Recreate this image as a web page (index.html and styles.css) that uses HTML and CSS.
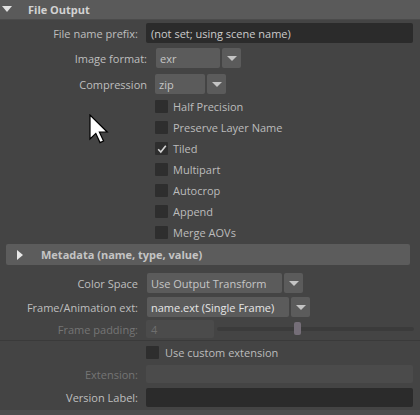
FILE: index.html
```html
<!DOCTYPE html>
<html>
<head>
<meta charset="utf-8">
<link rel="stylesheet" href="styles.css">
</head>
<body>
<div class="panel">
  <div class="header">
    <span class="tri-down"></span>
    <span class="header-title">File Output</span>
  </div>

  <div class="row r1">
    <label class="lbl w138">File name prefix:</label>
    <div class="field dark wide">(not set; using scene name)</div>
  </div>

  <div class="row r2">
    <label class="lbl w147">Image format:</label>
    <div class="dd">
      <div class="dd-val w-exr">exr</div>
      <div class="dd-btn"><span class="arrow"></span></div>
    </div>
  </div>

  <div class="row r3">
    <label class="lbl w147">Compression</label>
    <div class="dd">
      <div class="dd-val w-zip">zip</div>
      <div class="dd-btn"><span class="arrow"></span></div>
    </div>
  </div>

  <div class="checks">
    <div class="check"><span class="box"></span><span class="clabel">Half Precision</span></div>
    <div class="check"><span class="box"></span><span class="clabel">Preserve Layer Name</span></div>
    <div class="check"><span class="box"><svg class="tick" viewBox="0 0 12 12" width="12" height="12"><path d="M2.2 6.3 L4.8 9 L9.8 2.8" fill="none" stroke="#d4d4d4" stroke-width="1.6"/></svg></span><span class="clabel">Tiled</span></div>
    <div class="check"><span class="box"></span><span class="clabel">Multipart</span></div>
    <div class="check"><span class="box"></span><span class="clabel">Autocrop</span></div>
    <div class="check"><span class="box"></span><span class="clabel">Append</span></div>
    <div class="check"><span class="box"></span><span class="clabel">Merge AOVs</span></div>
  </div>

  <div class="section">
    <span class="tri-right"></span>
    <span class="section-title">Metadata (name, type, value)</span>
  </div>

  <div class="row r4">
    <label class="lbl w138">Color Space</label>
    <div class="dd gap9">
      <div class="dd-val w-cs">Use Output Transform</div>
      <div class="dd-btn"><span class="arrow"></span></div>
    </div>
  </div>

  <div class="row r5">
    <label class="lbl w138">Frame/Animation ext:</label>
    <div class="dd gap9">
      <div class="dd-val w-fa bright">name.ext (Single Frame)</div>
      <div class="dd-btn"><span class="arrow"></span></div>
    </div>
  </div>

  <div class="row r6">
    <label class="lbl w138 disabled">Frame padding:</label>
    <div class="field dis small">4</div>
    <div class="slider">
      <div class="track"></div>
      <div class="thumb"></div>
    </div>
  </div>

  <div class="sep"></div>

  <div class="row r7">
    <span class="spacer"></span>
    <span class="box"></span><span class="clabel">Use custom extension</span>
  </div>

  <div class="row r8">
    <label class="lbl w138 disabled">Extension:</label>
    <div class="field dis wide"></div>
  </div>

  <div class="row r9">
    <label class="lbl w138">Version Label:</label>
    <div class="field dark wide"></div>
  </div>

  <div class="bottom"></div>

  <svg class="cursor" width="20" height="30" viewBox="0 0 20 30">
    <path d="M1 1 L1 25 L6.8 19.4 L11 28.6 L14.6 27 L10.4 18 L18.2 18 Z" fill="#ffffff" stroke="#000000" stroke-width="1.2" stroke-linejoin="miter"/>
  </svg>
</div>
</body>
</html>
```

FILE: styles.css
```css
* { box-sizing: border-box; }
html, body {
  margin: 0;
  padding: 0;
  background: #444444;
}
body {
  font-family: "Open Sans", "DejaVu Sans", sans-serif;
  font-size: 11px;
  color: #bdbdbd;
}
.panel {
  position: relative;
  width: 420px;
  height: 415px;
  overflow: hidden;
  background: #444444;
}
.header {
  height: 20px;
  background: #5a5a5a;
  display: flex;
  align-items: center;
  border-bottom: 1px solid #4b4b4b;
}
.tri-down {
  width: 0;
  height: 0;
  margin-left: 2px;
  border-left: 5px solid transparent;
  border-right: 5px solid transparent;
  border-top: 6px solid #e2e2e2;
  margin-top: -1px;
}
.header-title {
  margin-left: 16px;
  font-weight: bold;
  color: #d2d2d2;
  font-size: 11px;
}
.row {
  display: flex;
  align-items: center;
}
.lbl {
  text-align: right;
  flex: none;
  white-space: nowrap;
  color: #bfbfbf;
}
.lbl.disabled { color: #757575; }
.w138 { width: 138px; margin-right: 8px; }
.w147 { width: 147px; margin-right: 9px; }
.field {
  height: 100%;
  display: flex;
  align-items: center;
  padding-left: 5px;
  border-radius: 2px;
  color: #cccccc;
}
.field.dark { background: #2b2b2b; }
.field.dis { background: #4b4b4b; color: #6e6e6e; }
.field.wide { width: 267px; }
.field.small { width: 68px; }

.r1 { height: 20px; margin-top: 3px; }
.r1 .field { padding-left: 5px; }
.r2 { height: 20px; margin-top: 5px; }
.r3 { height: 20px; margin-top: 6px; }
.r3 .dd { margin-left: -1px; }
.r4 { height: 20px; margin-top: 8px; }
.r5 { height: 20px; margin-top: 4px; }
.r6 { height: 18px; margin-top: 3px; }
.r7 { height: 18px; margin-top: 2px; }
.r8 { height: 18px; margin-top: 4px; }
.r9 { height: 19px; margin-top: 5px; }

.dd {
  display: flex;
  height: 100%;
  gap: 2px;
}
.dd.gap9 { margin-left: 1px; }
.dd-val {
  background: #5b5b5b;
  border-radius: 2px;
  display: flex;
  align-items: center;
  padding-left: 4px;
  color: #c6c6c6;
  white-space: nowrap;
}
.dd-val.bright { color: #e6e6e6; }
.w-exr { width: 64px; }
.w-zip { width: 50px; }
.w-cs { width: 135px; }
.w-fa { width: 142px; }
.dd-btn {
  width: 19px;
  background: #5b5b5b;
  border-radius: 2px;
  display: flex;
  align-items: center;
  justify-content: center;
}
.arrow {
  width: 0;
  height: 0;
  border-left: 5px solid transparent;
  border-right: 5px solid transparent;
  border-top: 5px solid #c4c4c4;
}

.checks {
  margin-top: 2px;
  padding-left: 155px;
}
.check {
  height: 21px;
  display: flex;
  align-items: center;
}
.box {
  width: 13px;
  height: 13px;
  background: #2e2e2e;
  border-radius: 1px;
  flex: none;
  display: flex;
  align-items: center;
  justify-content: center;
}
.clabel {
  margin-left: 5px;
  color: #bcbcbc;
  white-space: nowrap;
}
.r7 .spacer { width: 146px; flex: none; }
.r7 .clabel { margin-left: 6px; }

.section {
  margin: 1px 10px 0 6px;
  height: 21px;
  background: #5c5c5c;
  border-radius: 2px;
  display: flex;
  align-items: center;
}
.tri-right {
  width: 0;
  height: 0;
  margin-left: 11px;
  border-top: 5px solid transparent;
  border-bottom: 5px solid transparent;
  border-left: 6px solid #e8e8e8;
}
.section-title {
  margin-left: 18px;
  font-weight: bold;
  color: #c4c4c4;
}

.slider {
  position: relative;
  width: 197px;
  height: 100%;
  margin-left: 3px;
  display: flex;
  align-items: center;
}
.track {
  width: 100%;
  height: 4px;
  background: #3b3b3b;
  border-radius: 2px;
}
.thumb {
  position: absolute;
  left: 77px;
  top: 2px;
  width: 7px;
  height: 13px;
  background: #756e78;
  border-radius: 2px;
}
.sep {
  margin-top: 2px;
  height: 1px;
  background: #3a3a3a;
}
.bottom {
  margin-top: 3px;
  height: 10px;
  background: #4e4e4e;
}
.cursor {
  position: absolute;
  left: 89px;
  top: 114px;
}
```
